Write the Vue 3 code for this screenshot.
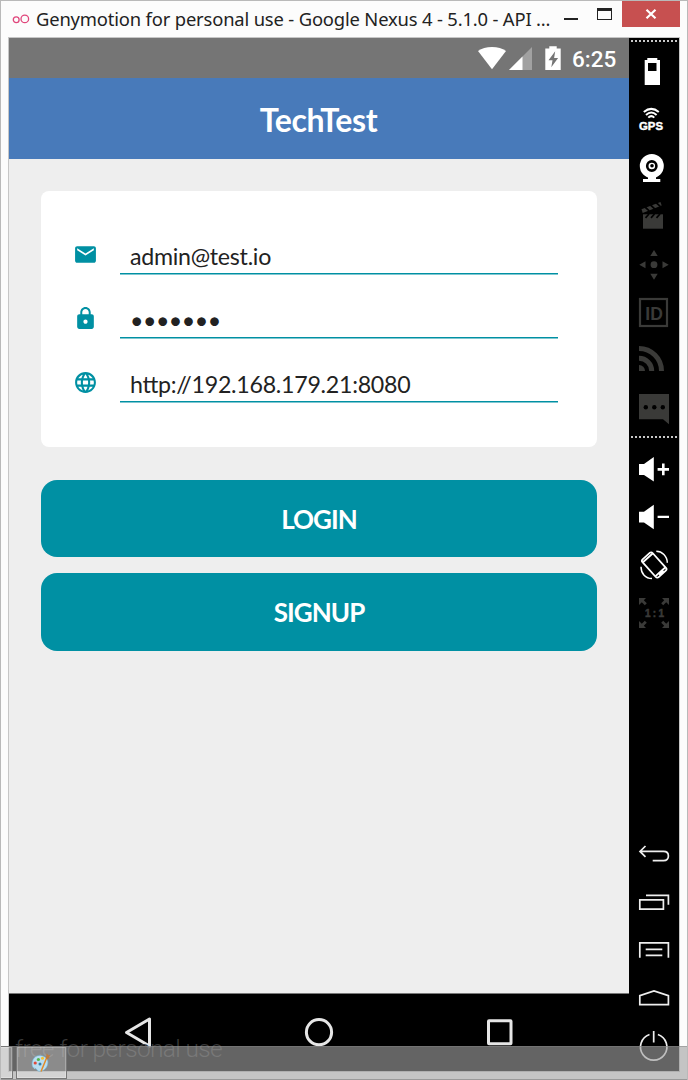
<script setup>
const fields = [
  { icon: 'mail', value: 'admin@test.io', kind: 'email' },
  { icon: 'lock', value: '•••••••', kind: 'bullets' },
  { icon: 'globe', value: 'http://192.168.179.21:8080', kind: 'url' }
]
const actions = ['LOGIN', 'SIGNUP']
</script>

<template>
  <div class="window">
    <header class="titlebar">
      <svg class="logo" width="18" height="14" viewBox="0 0 18 14">
        <g fill="none" stroke="#e0457b" stroke-width="1.3"><circle cx="4.2" cy="7.7" r="2.9" /><circle cx="12.8" cy="6.9" r="3.8" /></g>
      </svg>
      <span class="caption">Genymotion for personal use - Google Nexus 4 - 5.1.0 - API ...</span>
      <div class="controls">
        <svg width="58" height="27" viewBox="0 0 58 27" shape-rendering="crispEdges">
          <path d="M0 17h14v2H0z" fill="#222" />
          <path d="M33 7h15v12H33zM34 10v8h13v-8z" fill="#222" fill-rule="evenodd" />
        </svg>
        <div class="close">
          <svg width="12" height="10" viewBox="0 0 12 10"><path d="M1.5 .8l9 8.4M10.5.8l-9 8.4" stroke="#fff" stroke-width="2.2" /></svg>
        </div>
      </div>
    </header>

    <main class="frame">
      <section class="phone">
        <div class="status">
          <svg width="85" height="40" viewBox="0 0 85 40">
            <path d="M0 13Q5.5 9 14 9T28 13L14 31.3z" fill="#fff" />
            <path d="M54 9v23H31z" fill="#a1a1a1" /><path d="M44.5 18.5V32H31z" fill="#fff" />
            <path d="M67.3 10.5h4V8.3h7.4v2.2h4V32H67.3z" fill="#fff" />
            <path d="M77.2 13.2l-6.7 9h4l-1.2 7 6.8-9.3h-4z" fill="#757575" />
          </svg>
          <span class="clock">6:25</span>
        </div>
        <div class="appbar"><span>TechTest</span></div>
        <div class="content">
          <div class="card">
            <div v-for="f in fields" :key="f.icon" class="field">
              <svg v-if="f.icon === 'mail'" class="ficon" width="25" height="25" viewBox="0 0 24 24"><path fill="#0090a3" d="M20 4H4c-1.1 0-1.99.9-1.99 2L2 18c0 1.1.9 2 2 2h16c1.1 0 2-.9 2-2V6c0-1.1-.9-2-2-2zm0 4l-8 5-8-5V6l8 5 8-5v2z" /></svg>
              <svg v-else-if="f.icon === 'lock'" class="ficon" width="25" height="25" viewBox="0 0 24 24"><path fill="#0090a3" d="M18 8h-1V6c0-2.76-2.24-5-5-5S7 3.24 7 6v2H6c-1.1 0-2 .9-2 2v10c0 1.1.9 2 2 2h12c1.1 0 2-.9 2-2V10c0-1.1-.9-2-2-2zm-6 9c-1.1 0-2-.9-2-2s.9-2 2-2 2 .9 2 2-.9 2-2 2zm3.1-9H8.9V6c0-1.71 1.39-3.1 3.1-3.1 1.71 0 3.1 1.39 3.1 3.1v2z" /></svg>
              <svg v-else class="ficon" width="25" height="25" viewBox="0 0 24 24"><path fill="#0090a3" d="M11.99 2C6.47 2 2 6.48 2 12s4.47 10 9.99 10C17.52 22 22 17.52 22 12S17.52 2 11.99 2zm6.93 6h-2.95c-.32-1.25-.78-2.45-1.38-3.56 1.84.63 3.37 1.91 4.33 3.56zM12 4.04c.83 1.2 1.48 2.53 1.91 3.96h-3.82c.43-1.43 1.08-2.76 1.91-3.96zM4.26 14C4.1 13.36 4 12.69 4 12s.1-1.36.26-2h3.38c-.08.66-.14 1.32-.14 2 0 .68.06 1.34.14 2H4.26zm.82 2h2.95c.32 1.25.78 2.45 1.38 3.56-1.84-.63-3.37-1.9-4.33-3.56zm2.95-8H5.08c.96-1.66 2.49-2.93 4.33-3.56C8.81 5.55 8.35 6.75 8.03 8zM12 19.96c-.83-1.2-1.48-2.53-1.91-3.96h3.82c-.43 1.43-1.08 2.76-1.91 3.96zM14.34 14H9.66c-.09-.66-.16-1.32-.16-2 0-.68.07-1.35.16-2h4.68c.09.65.16 1.32.16 2 0 .68-.07 1.34-.16 2zm.25 5.56c.6-1.11 1.06-2.31 1.38-3.56h2.95c-.96 1.65-2.49 2.93-4.33 3.56zM16.36 14c.08-.66.14-1.32.14-2 0-.68-.06-1.34-.14-2h3.38c.16.64.26 1.31.26 2s-.1 1.36-.26 2h-3.38z" /></svg>
              <div class="input"><span :class="f.kind">{{ f.value }}</span></div>
            </div>
          </div>
          <div v-for="a in actions" :key="a" class="action"><span>{{ a }}</span></div>
        </div>
        <div class="navbar">
          <svg width="620" height="77" viewBox="0 0 620 77" fill="none" stroke="#e6e6e6" stroke-width="3" stroke-linejoin="round">
            <path d="M117.5 38.5L140.5 25v27z" /><circle cx="310" cy="38.2" r="12.6" /><rect x="479.5" y="26.7" width="22.5" height="23" rx=".5" />
          </svg>
          <span class="watermark">free for personal use</span>
        </div>
      </section>

      <aside class="tools">
        <div class="dots"></div>
        <svg class="tool" viewBox="0 0 50 48"><path fill="#fff" fill-rule="evenodd" d="M18.3 11h10v2H31v25H15.7V13h2.6zM19 16v8h8.5v-8z" /></svg>
        <svg class="tool" viewBox="0 0 50 48">
          <g fill="none" stroke="#fff" stroke-width="2"><path d="M14.8 17Q22.3 10.7 29.8 17" /><path d="M17 20Q22.3 15 27.6 20" /><path d="M19.3 22.6Q22.3 19.6 25.3 22.6" /></g>
          <text x="10" y="34.5" class="gps" textLength="24" lengthAdjust="spacingAndGlyphs">GPS</text>
        </svg>
        <svg class="tool" viewBox="0 0 50 48"><circle cx="22.8" cy="23" r="12" fill="#fff" /><circle cx="22.8" cy="23" r="4.6" fill="#fff" stroke="#000" stroke-width="2.6" /><circle cx="23" cy="22.8" r="1.8" /><path d="M19 33h8v3h4.3v3H14v-3h5z" fill="#fff" /></svg>
        <svg class="tool dim" viewBox="0 0 50 48"><path d="M14 23.3h20v14.4H14z" /><path d="M12.5 18.3L31.5 11l1.2 3.4-19 7.6z" /><path d="M16 16l4.2 3.8M21.5 14l4.2 3.8M27 11.5l4.2 3.8M20 23l-3.5 3.8M25.5 23L22 26.8M31 23l-3.5 3.8" stroke="#000" stroke-width="1.7" /></svg>
        <svg class="tool dim" viewBox="0 0 50 48"><circle cx="25" cy="25.7" r="3.4" /><path d="M25 11l3.7 6h-7.4zM25 40.7l3.7-6h-7.4zM10.3 25.7l6.2-3.5v7zM39.7 25.7l-6.2-3.5v7z" /></svg>
        <svg class="tool dim" viewBox="0 0 50 48"><rect x="11" y="12" width="27" height="27" fill="none" stroke="#3a3a38" stroke-width="2.2" /><text x="16.3" y="32.7" class="idtext" textLength="17.5" lengthAdjust="spacingAndGlyphs">ID</text></svg>
        <svg class="tool dim" viewBox="0 0 50 48"><path d="M10 30a6 6 0 0 1 6 6h-6z" /><path d="M10 23.3A12.7 12.7 0 0 1 22.7 36M10 13.5A22.5 22.5 0 0 1 32.5 36" fill="none" stroke="#3a3a38" stroke-width="5" /></svg>
        <svg class="tool dim" viewBox="0 0 50 48"><path d="M10 11h30v30.3l-6-5H10z" /><g fill="#000"><circle cx="16.8" cy="24.3" r="2.2" /><circle cx="25.3" cy="24.3" r="2.2" /><circle cx="33.8" cy="24.3" r="2.2" /></g></svg>
        <div class="dots second"></div>
        <svg class="tool" viewBox="0 0 50 48"><path d="M10 19h5l9.8-7v24.5L15 30h-5zM33 18.6h2.6v4.5H40v2.6h-4.4v4.5H33v-4.5h-4.4v-2.6H33z" fill="#fff" /></svg>
        <svg class="tool" viewBox="0 0 50 48"><path d="M10 18.7h5l9.8-7v24.5L15 29.5h-5zM28.6 22.7H40v2.4H28.6z" fill="#fff" /></svg>
        <svg class="tool" viewBox="0 0 50 48" fill="none" stroke="#fff" stroke-width="1.8">
          <g transform="translate(25.2 24) rotate(-42)"><rect x="-6.8" y="-12" width="13.6" height="24" rx="2" /><path d="M-6.5-9.6H6.5M-6.5 9.2H6.5M-3 10.8h6" /></g>
          <path d="M27.3 10.2C33 10.2 38.2 15 38.3 21.7M12 25.7C12 32.5 16.5 37.5 23 37.5" stroke-width="1.5" />
        </svg>
        <svg class="tool dim" viewBox="0 0 50 48">
          <path id="corner" d="M10 9h7l-2.2 2.2 3 3-2 2-3-3L10 16z" /><use href="#corner" transform="matrix(-1 0 0 1 50 0)" /><use href="#corner" transform="matrix(1 0 0 -1 0 48)" /><use href="#corner" transform="rotate(180 25 24)" />
          <text x="16" y="27.6" class="ratio" textLength="19">1:1</text>
        </svg>
        <div class="spacer"></div>
        <svg class="tool line" viewBox="0 0 50 48"><path d="M11 21.4h23.5q4.9 0 4.9 4.6t-4.9 4.7H23.7M16.5 16L11 21.4l5.5 5.4" /></svg>
        <svg class="tool line" viewBox="0 0 50 48"><path d="M10.8 21.8h23.6v9.4H10.8zM17 17.3h22.4v9.5" /></svg>
        <svg class="tool line" viewBox="0 0 50 48"><path d="M10.8 31.8v-15h28.6v15M16.7 23.3h16.6M16.7 29.3h16.6" /></svg>
        <svg class="tool line" viewBox="0 0 50 48"><path d="M10.8 30.6v-8.9L25 17l14.4 4.7v8.9z" /></svg>
        <svg class="tool line" viewBox="0 0 50 48"><path d="M20.5 12.5a13.2 13.2 0 1 0 8.4 0M24.7 9v11.5" /></svg>
      </aside>
    </main>

    <footer class="taskbar">
      <div class="task first"></div>
      <div class="task paint">
        <svg width="22" height="22" viewBox="0 0 22 22">
          <path d="M2 12C2 5 8 2 13 4c6 2 6 8 3 12-3 4-8 4-9 2-1-3-5 0-5-6z" fill="#b9def0" stroke="#6baed1" stroke-width=".6" />
          <circle cx="5.2" cy="11" r="1.6" fill="#e04a3a" /><circle cx="8.4" cy="7.5" r="1.6" fill="#55b54a" /><circle cx="12.5" cy="6.2" r="1.5" fill="#f2c230" /><circle cx="10" cy="12" r="1.5" fill="#347fa9" />
          <path d="M11 19.5L17 5" stroke="#e38a26" stroke-width="1.5" /><path d="M15.8 6.3l1-5 1.4 2 2.2-.5-2.6 4.6z" fill="#bd7b3e" />
        </svg>
      </div>
    </footer>
  </div>
</template>

<style>
body { margin: 0; overflow: hidden; }
</style>
<style scoped>
* { box-sizing: border-box; }
svg { display: block; flex: none; }
.window { position: relative; width: 688px; height: 1080px; background: #fcfcfc; border: 1px solid #b9b9b9; border-bottom: 0; overflow: hidden; }
.titlebar { height: 36px; display: flex; align-items: flex-start; padding-left: 11px; }
.logo { margin-top: 11px; }
.caption { width: 528px; margin-left: 6px; font: 18.4px/36px "Noto Sans", "Open Sans", sans-serif; letter-spacing: -.17px; color: #222; white-space: nowrap; }
.controls { display: flex; }
.close { width: 58px; height: 26px; background: #c75050; display: flex; align-items: center; justify-content: center; }
.frame { display: flex; width: 672px; height: 1035px; margin-left: 7px; border: 1px solid #c6c6c6; }
.phone { width: 620px; height: 1033px; display: flex; flex-direction: column; background: #eee; }
.status { height: 40px; background: #757575; display: flex; padding-left: 469px; }
.clock { margin-left: 9px; font: 500 22.5px/43px Roboto, sans-serif; color: #fff; }
.appbar { height: 81px; background: #487aba; color: #fff; text-align: center; font: bold 32px/84px Lato, sans-serif; letter-spacing: -.35px; padding-right: 1px; }
.content { flex: 1; padding: 32px 32px 0; }
.card { height: 256px; background: #fff; border-radius: 8px; padding: 28px 39px 0 32px; margin-bottom: 32.5px; }
.field { height: 64px; display: flex; }
.ficon { margin-top: 23.4px; }
.input { width: 438px; height: 55px; margin-left: 22px; border-bottom: 1px solid #0090a3; box-shadow: 0 1px rgba(0, 144, 163, .5); padding-left: 10px; font: 23.2px/75px Lato, sans-serif; font-feature-settings: "liga" 1; letter-spacing: -.27px; color: #222; white-space: nowrap; }
.bullets { letter-spacing: -.5px; }
.action { height: 77.5px; margin-bottom: 16px; border-radius: 16px; background: #0090a3; color: #fff; text-align: center; font: bold 26px/79px Lato, sans-serif; letter-spacing: -.95px; }
.navbar { position: relative; height: 78px; background: #000; border-top: 1px solid #777; }
.watermark { position: absolute; left: 6px; top: 38px; font: 300 24.5px/34px Roboto, sans-serif; letter-spacing: -.66px; color: #383838; white-space: nowrap; }
.tools { width: 50px; height: 1033px; background: #000; display: flex; flex-direction: column; padding-bottom: 1px; }
.tools .dots { width: 46px; height: 2px; margin: 2px 2px 5px; flex: none; background: repeating-linear-gradient(90deg, #c8c8c8 0 2px, #000 2px 4px); }
.tools .second { margin: 5px 2px 7px; }
.tool { width: 50px; height: 48px; }
.dim { fill: #3a3a38; }
.line { fill: none; stroke: #eee; stroke-width: 1.7; }
.spacer { flex: 1; }
.gps { font: bold 10.5px "Liberation Sans", sans-serif; fill: #fff; stroke: #fff; stroke-width: .4px; }
.idtext { font: bold 18.8px "Liberation Sans", sans-serif; }
.ratio { font: bold 10px "Liberation Sans", sans-serif; stroke: #3a3a38; stroke-width: .5px; }
.taskbar { position: absolute; left: -1px; top: 1045px; width: 688px; height: 34px; background: rgba(161, 161, 161, .62); border-top: 1px solid rgba(130, 130, 130, .5); border-bottom: 1px solid #999; display: flex; gap: 3px; }
.task { margin-top: -1px; border: 1px solid #777; background: rgba(255, 255, 255, .25); box-shadow: inset 0 0 0 1px rgba(255, 255, 255, .25); }
.first { width: 13px; border-left: 0; }
.paint { width: 51px; padding: 5px 0 0 13px; }
</style>
